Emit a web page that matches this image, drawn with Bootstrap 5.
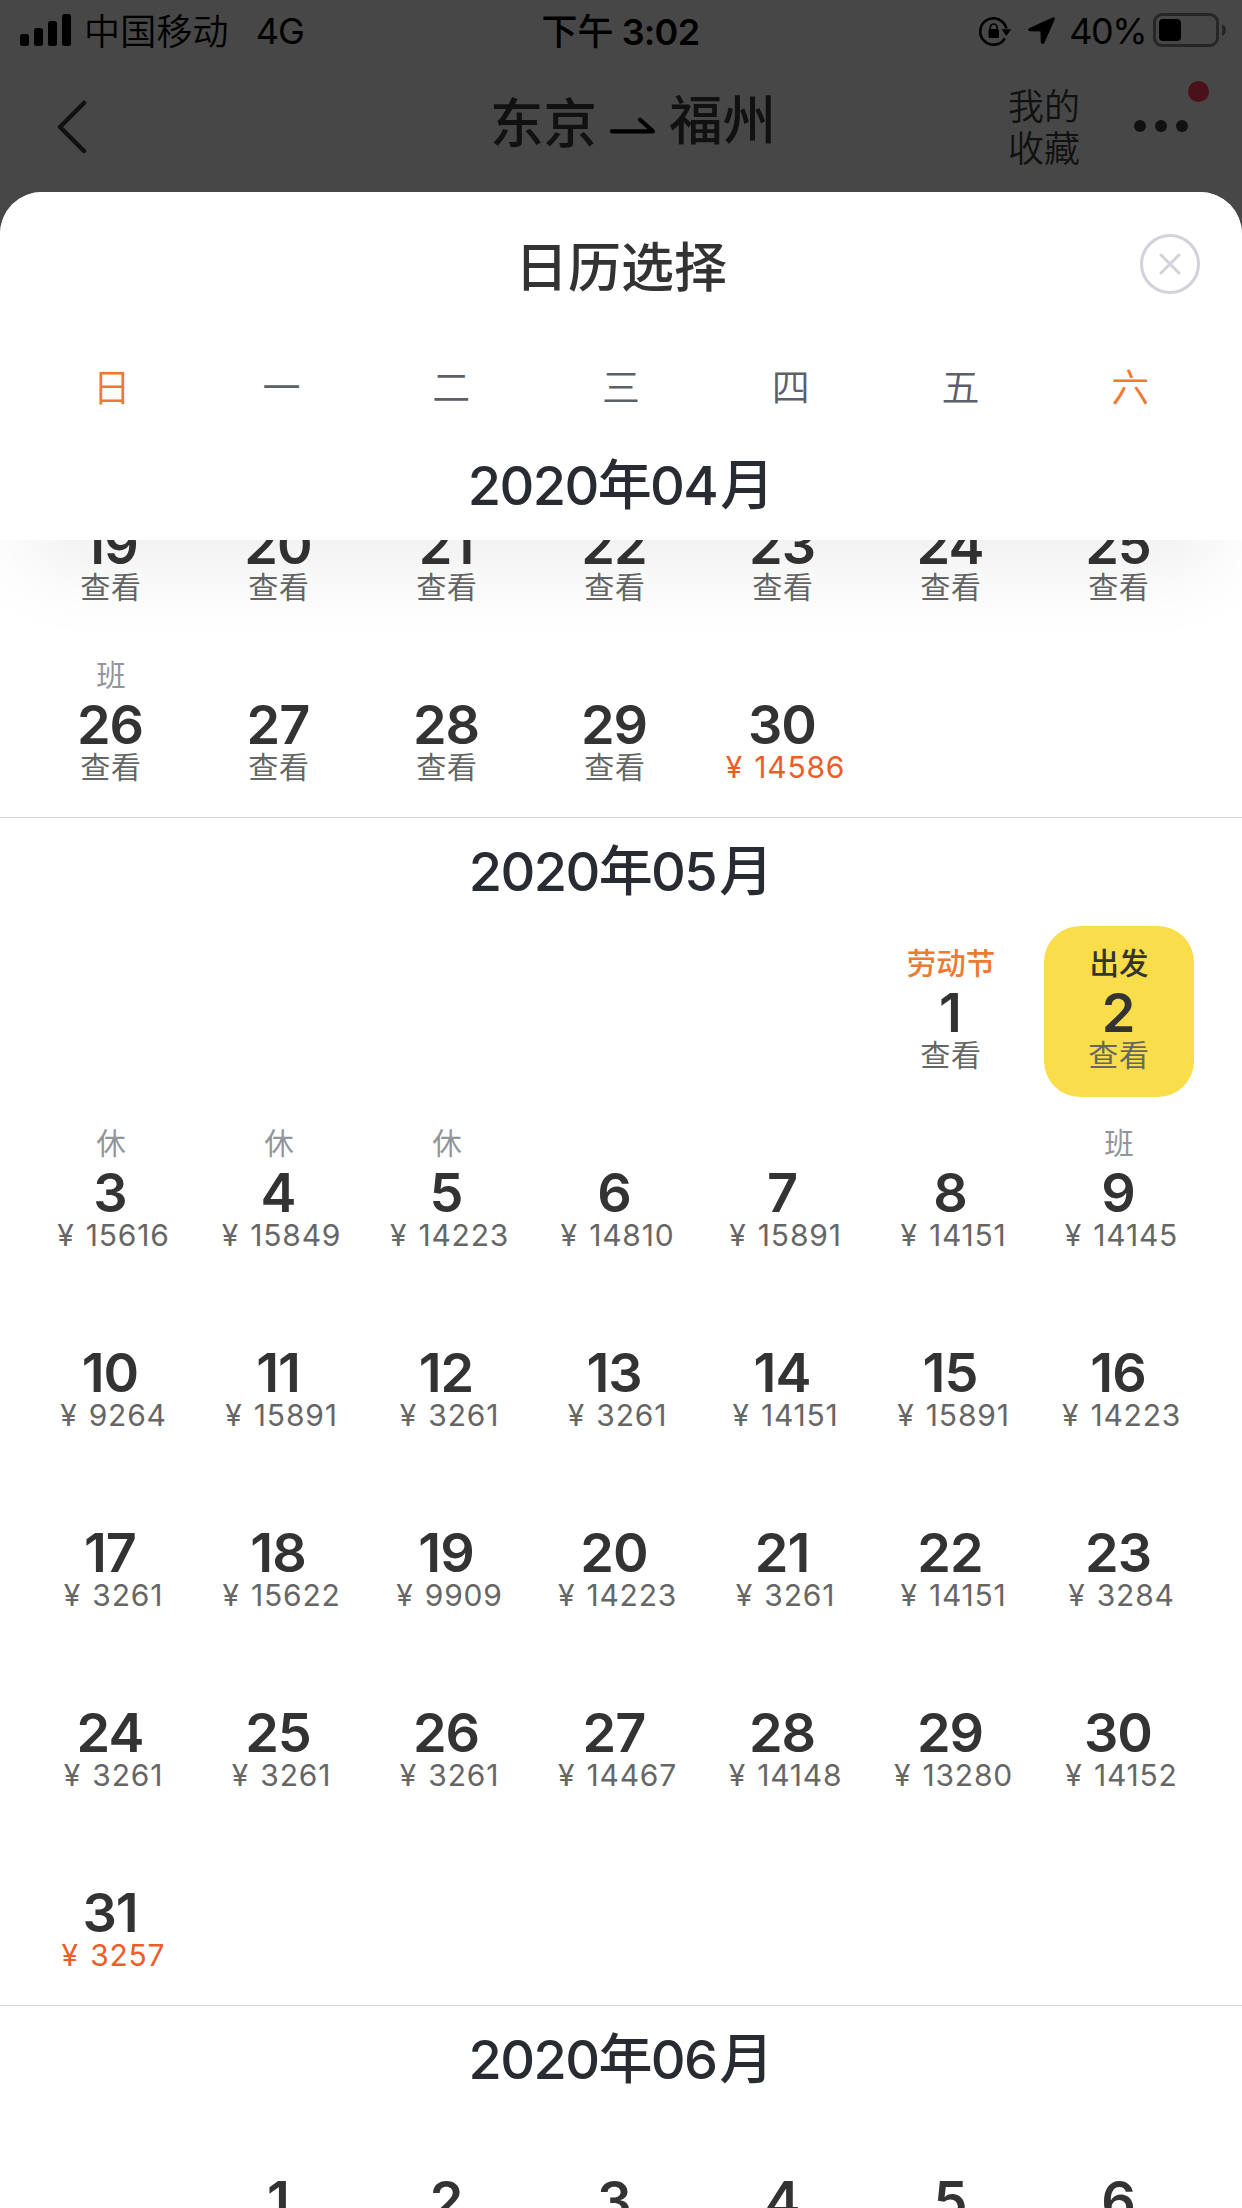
<!DOCTYPE html>
<html lang="zh-CN">
<head>
<meta charset="utf-8">
<title>日历选择</title>
<link href="https://cdn.jsdelivr.net/npm/bootstrap@5.3.0/dist/css/bootstrap.min.css" rel="stylesheet">
<style>
body{font-family:Inter,"Noto Sans CJK SC",sans-serif;background:#474747;color:#333;width:1242px;height:2208px;overflow:hidden}
svg{display:block;flex:none}
.topbar{height:192px;color:#000}
.status{height:62px;padding:0 16px 0 20px;font-size:36px;line-height:62px}
.status .side{width:440px}
.carrier{margin-left:12px;padding-top:1px;font-weight:350;letter-spacing:.2px}
.net{margin-left:27px;letter-spacing:-1px}
.clock{font-weight:500;padding:1px 5px 0 0}
.clock b{font-weight:600;margin-left:8px;letter-spacing:-.7px}
.pct{letter-spacing:-1.5px;margin:0 6px 0 13px}
.navrow{height:130px;color:#111;padding:0 31px 0 57px}
.route{font-size:53.5px;font-weight:500;line-height:60px;padding:0 0 9px 24px}
.route svg{margin:6px 13px 0 13px}
.route span:first-child{padding-top:2px}
.route span:last-child{padding-bottom:4px}
.fav{font-size:36px;line-height:42px;font-weight:350;width:78px;padding-top:2px}
.sheet{background:#fff;border-radius:42px 42px 0 0;height:2016px;overflow:hidden}
.sheet-head{height:348px;background:#fff;z-index:2;box-shadow:0 56px 76px -26px rgba(0,0,0,.065)}
.sheet-title{height:148px;font-size:53px;font-weight:500;line-height:153px;color:#333}
.closer{right:42px;top:42px}
.week{height:92px;padding:0 27px;font-size:38px;line-height:94px;color:#5d6068;font-weight:350}
.holiday{color:#ee7a30}
.month{height:108px;line-height:108px;font-size:54px;font-weight:500;color:#292b33;letter-spacing:-1.6px}
.month span{letter-spacing:0;padding-left:3px}
.days{display:grid;grid-template-columns:repeat(7,168px);grid-auto-rows:180px;padding-left:27px}
.days.scrolled{margin-top:-82px}
.line{box-shadow:0 -1px #d5d6d8}
.day{width:150px;height:171px;margin:0 auto;padding-top:20px}
.day .tag{height:34px;line-height:34px;font-size:29.5px;font-weight:400;color:#92959c}
.day .num{height:50px;margin-top:7px;line-height:51px;padding-right:2px;font-size:54px;font-weight:600;color:#333;letter-spacing:-1px}
.day .fare{height:38px;line-height:37px;font-size:30px;color:#666;white-space:nowrap;letter-spacing:.8px}
.day .money{padding-left:5px;word-spacing:2px;line-height:36px}
.day .low{color:#ee5d29}
.day .tag.fest{color:#ee7a30;font-weight:500}
.day.picked{background:#f9dd4a;border-radius:36px}
.picked .tag{color:#333;font-weight:500}
</style>
<script src="https://cdn.jsdelivr.net/npm/bootstrap@5.3.0/dist/js/bootstrap.bundle.min.js"></script>
</head>
<body>
<header class="topbar">
  <div class="status d-flex align-items-center justify-content-between">
    <div class="side d-flex align-items-center">
      <svg width="52" height="62"><rect y="34" width="9" height="12" rx="2.5"/><rect x="14" y="28" width="9" height="18" rx="2.5"/><rect x="28" y="21" width="9" height="25" rx="2.5"/><rect x="42" y="14" width="9" height="32" rx="2.5"/></svg>
      <span class="carrier">中国移动</span><span class="net">4G</span>
    </div>
    <div class="clock text-nowrap">下午<b>3:02</b></div>
    <div class="side d-flex align-items-center justify-content-end">
      <svg width="34" height="62" viewBox="980 0 34 62"><path d="M1008.300 28.500A13.200 13.200 0 1 0 1006.800 38.300" fill="none" stroke="#000" stroke-width="2.600"/><path d="M1003.600 29.300h9.600l-4.900 6.700z"/><rect x="990.500" y="29" width="10.500" height="9" rx="1.500"/><path d="M992.300 30v-2.600a3.400 3.400 0 0 1 6.800 0V30" fill="none" stroke="#000" stroke-width="1.700"/></svg>
      <svg class="ms-3" width="28" height="62" viewBox="1030 0 28 62"><path d="M1031 28.200l23.500-10.800q3-1 2.200 2.200L1046.300 43q-2.800 2.500-3.500-1l-.3-10.500-10.800-.3q-3-.8-.7-3z"/></svg>
      <span class="pct">40%</span>
      <svg width="74" height="62" viewBox="1152 0 74 62"><rect x="1154.500" y="14.500" width="63" height="31" rx="7.500" fill="none" stroke="#262626" stroke-width="3"/><rect x="1159" y="19" width="22" height="22" rx="4"/><path d="M1222 24q4 2 4 6t-4 6z" fill="#262626"/></svg>
    </div>
  </div>
  <div class="navrow d-flex align-items-center justify-content-between position-relative">
    <svg width="30" height="54" viewBox="57 99 30 54"><path d="M84 102L60 126l24 24" fill="none" stroke="#111" stroke-width="4.500" stroke-linecap="round" stroke-linejoin="round"/></svg>
    <div class="route position-absolute start-50 translate-middle-x d-flex align-items-center text-nowrap"><span>东京</span><svg width="46" height="20" viewBox="611 111 46 20"><path d="M613 126.300h41l-13-11.500" fill="none" stroke="#000" stroke-width="4.200" stroke-linecap="round" stroke-linejoin="round"/></svg><span>福州</span></div>
    <div class="d-flex align-items-center">
      <div class="fav">我的<br>收藏</div>
      <svg width="77" height="130" viewBox="1134 62 77 130" class="ms-5"><g fill="#111"><circle cx="1140" cy="126" r="6"/><circle cx="1161" cy="126" r="6"/><circle cx="1182" cy="126" r="6"/></g><circle cx="1198.500" cy="91.500" r="10.500" fill="#4b111b"/></svg>
    </div>
  </div>
</header>
<main class="sheet">
  <div class="sheet-head position-relative">
    <div class="sheet-title text-center">日历选择</div>
    <svg class="closer position-absolute" width="60" height="60" fill="none" stroke="#d2d3da" stroke-width="3"><circle cx="30" cy="30" r="28.500"/><path d="M21 21l18 18M39 21L21 39" stroke-linecap="round"/></svg>
    <div class="week row row-cols-7 g-0 text-center"><div class="col holiday">日</div><div class="col">一</div><div class="col">二</div><div class="col">三</div><div class="col">四</div><div class="col">五</div><div class="col holiday">六</div></div>
    <div class="month text-center">2020年04<span>月</span></div>
  </div>
  <section class="days scrolled" data-offset="0" data-days="19 查看|20 查看|21 查看|22 查看|23 查看|24 查看|25 查看|26 查看 班|27 查看|28 查看|29 查看|30 14586!"></section>
  <div class="month line text-center">2020年05<span>月</span></div>
  <section class="days" data-offset="5" data-days="1 查看 劳动节|2 查看 出发|3 15616 休|4 15849 休|5 14223 休|6 14810|7 15891|8 14151|9 14145 班|10 9264|11 15891|12 3261|13 3261|14 14151|15 15891|16 14223|17 3261|18 15622|19 9909|20 14223|21 3261|22 14151|23 3284|24 3261|25 3261|26 3261|27 14467|28 14148|29 13280|30 14152|31 3257!"></section>
  <div class="month line text-center">2020年06<span>月</span></div>
  <section class="days" data-offset="1" data-days="1|2|3|4|5|6"></section>
</main>
<script>
// Each entry is "day fare tag"; a trailing "!" marks the lowest fare of the month.
document.querySelectorAll('.days').forEach(grid => {
  const cells = grid.dataset.days.split('|').map(entry => {
    const [num, fare = '', tag = ''] = entry.trim().split(' ');
    const money = /^\d/.test(fare), low = fare.endsWith('!');
    const text = money ? '¥ ' + fare.replace('!', '') : fare;
    return `<div><div class="day text-center${tag === '出发' ? ' picked' : ''}">
      <div class="tag${tag === '劳动节' ? ' fest' : ''}">${tag}</div>
      <div class="num">${num}</div>
      <div class="fare${money ? ' money' : ''}${low ? ' low' : ''}">${text}</div></div></div>`;
  });
  grid.innerHTML = '<div></div>'.repeat(+grid.dataset.offset) + cells.join('');
});
</script>
</body>
</html>
